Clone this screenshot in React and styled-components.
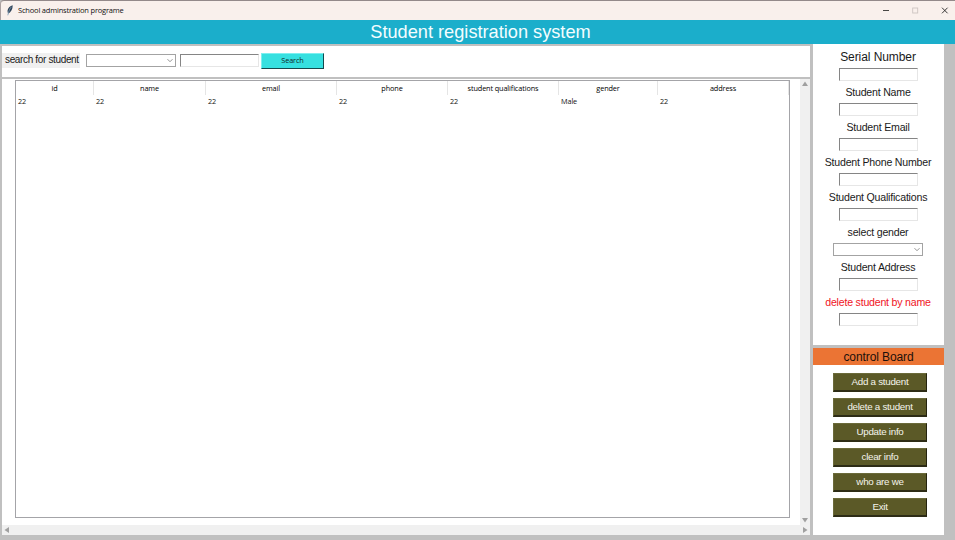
import React from "react";
import styled, { createGlobalStyle } from "styled-components";

const GlobalStyle = createGlobalStyle`
  * { box-sizing: border-box; }
  body { margin: 0; overflow: hidden; background: #c0c0c0; }
  button, input { font: inherit; margin: 0; outline: none; border-radius: 0; }
`;

const arial = `"Liberation Sans", Arial, sans-serif`;
const segoe = `"Open Sans", "Noto Sans", sans-serif`;

const Window = styled.div`
  width: 955px;
  height: 540px;
  display: flex;
  flex-direction: column;
  background: #c0c0c0;
  font-family: ${arial};
  color: #1a1a1a;
  overflow: hidden;
`;

const TitleBar = styled.header`
  height: 20px;
  flex: none;
  display: flex;
  align-items: center;
  background: #f9f0ec;
  border-top: 1px solid #93898a;
  border-left: 1px solid #aaa0a0;
  border-top-left-radius: 4px;
  padding: 0 0 1px 6px;
`;

const WindowTitle = styled.span`
  font: 7.5px/17px ${segoe};
  letter-spacing: -0.19px;
  margin-left: 5px;
  color: #111;
  flex: 1;
`;

const WindowControls = styled.svg`
  width: 76px;
  height: 19px;
  display: block;
`;

const Banner = styled.h1`
  height: 24px;
  flex: none;
  margin: 0;
  padding-left: 6px;
  background: #1baecb;
  color: #f3fdff;
  font: 400 18.2px/25px ${arial};
  text-align: center;
`;

const Body = styled.div`
  flex: 1;
  display: flex;
  gap: 3px;
  padding: 0 11px 5px 2px;
  min-height: 0;
`;

const Main = styled.main`
  width: 808px;
  display: flex;
  flex-direction: column;
  gap: 2px;
  padding-top: 2px;
`;

const SearchBar = styled.section`
  height: 31px;
  display: flex;
  align-items: center;
  padding-bottom: 2px;
  background: #fff;
`;

const SearchLabel = styled.label`
  width: 78px;
  height: 15px;
  background: #f0f0f0;
  font-size: 10px;
  line-height: 14px;
  padding-left: 3px;
  white-space: nowrap;
  letter-spacing: -0.35px;
`;

const Combo = styled.button`
  width: 90px;
  height: 13px;
  display: flex;
  align-items: center;
  justify-content: flex-end;
  padding: 0 2px 0 0;
  background: #fff;
  border: 1px solid #a3a3a3;
  margin: ${(p) => p.$margin || 0};
`;

const Entry = styled.input`
  display: block;
  width: 79px;
  height: 13px;
  padding: 0 2px;
  font-size: 9px;
  background: #fff;
  border: 1px solid;
  border-color: #858585 #e6e6e6 #e6e6e6 #858585;
`;

const SearchButton = styled.button`
  width: 63px;
  height: 16px;
  margin-left: 2px;
  padding: 0;
  background: #36e0e0;
  border: solid;
  border-width: 1px 1.5px 1.5px 1px;
  border-color: #7defef #15494d #15494d #7defef;
  font: 7.3px/13px ${segoe};
  letter-spacing: -0.1px;
  color: #102828;
`;

const TablePanel = styled.section`
  flex: 1;
  display: grid;
  grid-template: 1fr 10px / 1fr 10px;
  background: #fff;
`;

const TableFrame = styled.div`
  margin: 1px 10px 7px 13px;
  border: 1px solid #a4a4a8;
`;

const Table = styled.table`
  width: 773px;
  table-layout: fixed;
  border-collapse: separate;
  border-spacing: 0;
  font: 7.3px/13px ${segoe};
  color: #000;
  letter-spacing: -0.12px;
`;

const HeadCell = styled.th`
  width: ${(p) => p.$width}px;
  height: 14px;
  padding: 0;
  font-weight: 400;
  text-align: center;
  border-right: 1px solid #e5e5e5;
  white-space: nowrap;
`;

const Cell = styled.td`
  height: 13px;
  padding: 0 0 0 2px;
  color: #111;
`;

const Scrollbar = styled.div`
  display: flex;
  flex-direction: ${(p) => (p.$horizontal ? "row" : "column")};
  grid-column: ${(p) => (p.$horizontal ? "1 / 3" : "auto")};
  justify-content: space-between;
  align-items: center;
  padding: ${(p) => (p.$horizontal ? "0 2px" : "2px 0 2px")};
  background: #f0f0f0;
`;

const Side = styled.aside`
  width: 131px;
  display: flex;
  flex-direction: column;
  gap: 3px;
`;

const Form = styled.form`
  height: 301px;
  padding-top: 5px;
  background: #fff;
`;

const Field = styled.div`
  height: 35px;
  display: flex;
  flex-direction: column;
  align-items: center;
  padding-right: 1px;
`;

const FieldLabel = styled.label`
  height: 19px;
  line-height: ${(p) => (p.$large ? 17 : 16)}px;
  font-size: ${(p) => (p.$large ? 12 : 10.6)}px;
  color: ${(p) => p.$color || "#1a1a1a"};
  letter-spacing: ${(p) => (p.$large ? -0.08 : -0.21)}px;
  white-space: nowrap;
`;

const ControlBoard = styled.section`
  flex: 1;
  display: flex;
  flex-direction: column;
  align-items: center;
  background: #fff;
`;

const BoardTitle = styled.h2`
  width: 100%;
  height: 17px;
  margin: 0 0 8px;
  background: #eb7434;
  font: 400 12px/18px ${arial};
  letter-spacing: -0.1px;
  text-align: center;
  color: #1b100b;
`;

const BoardButton = styled.button`
  width: 94px;
  height: 19px;
  margin: 0 0 6px 3px;
  padding: 0;
  background: #5b5927;
  border: solid;
  border-width: 1px 1px 2px 1px;
  border-color: #6b6a3a #25240f #2d2c16 #6b6a3a;
  color: #f4f4ec;
  font: 9.8px/16px ${arial};
  letter-spacing: -0.28px;
`;

const Glyph = styled.svg`
  display: block;
  flex: none;
`;

const Chevron = () => (
  <Glyph width="6" height="5" viewBox="0 0 6 5">
    <path d="M.5 1.2 3 3.7 5.5 1.2" fill="none" stroke="#777" strokeWidth=".8" />
  </Glyph>
);

const Arrow = ({ points }) => (
  <Glyph width="6" height="6" viewBox="0 0 6 6">
    <polygon points={points} fill="#a0a0a0" />
  </Glyph>
);

const Feather = () => (
  <Glyph width="6" height="11" viewBox="0 0 6 11">
    <path d="M5.7.3C3.3.8 1 3 .6 5.3.4 6.7.8 8 1.3 8.5 4 7.3 5.8 4.2 5.7.3Z" fill="#2d4257" />
    <path d="M4.5 1.8C3 3.2 1.8 5.5.8 10.3" fill="none" stroke="#7d9ab5" strokeWidth=".8" />
  </Glyph>
);

const columns = [
  ["id", "22", 78],
  ["name", "22", 112],
  ["email", "22", 131],
  ["phone", "22", 111],
  ["student qualifications", "22", 111],
  ["gender", "Male", 99],
  ["address", "22", 131],
];

const fields = [
  { label: "Serial Number", large: true },
  { label: "Student Name" },
  { label: "Student Email" },
  { label: "Student Phone Number" },
  { label: "Student Qualifications" },
  { label: "select gender", combo: true },
  { label: "Student Address" },
  { label: "delete student by name", color: "#f0141e" },
];

const actions = ["Add a student", "delete a student", "Update info", "clear info", "who are we", "Exit"];

export default function App() {
  return (
    <>
      <GlobalStyle />
      <Window>
        <TitleBar>
          <Feather />
          <WindowTitle>School adminstration programe</WindowTitle>
          <WindowControls viewBox="0 0 76 19" fill="none">
            <path d="M4 9.5h6" stroke="#333" strokeWidth=".9" />
            <rect x="33.7" y="7" width="5" height="5" stroke="#ccc4c1" strokeWidth=".9" />
            <path d="m63 6.7 5.6 5.6m0-5.6L63 12.3" stroke="#222" strokeWidth=".9" />
          </WindowControls>
        </TitleBar>
        <Banner>Student registration system</Banner>
        <Body>
          <Main>
            <SearchBar>
              <SearchLabel>search for student</SearchLabel>
              <Combo $margin="0 4px 0 6px" aria-label="Search field"><Chevron /></Combo>
              <Entry aria-label="Search text" />
              <SearchButton>Search</SearchButton>
            </SearchBar>
            <TablePanel>
              <TableFrame>
                <Table>
                  <thead>
                    <tr>{columns.map(([name, , width]) => <HeadCell key={name} $width={width}>{name}</HeadCell>)}</tr>
                  </thead>
                  <tbody>
                    <tr>{columns.map(([name, value]) => <Cell key={name}>{value}</Cell>)}</tr>
                  </tbody>
                </Table>
              </TableFrame>
              <Scrollbar>
                <Arrow points="3,.5 6,5 0,5" />
                <Arrow points="0,1 6,1 3,5.5" />
              </Scrollbar>
              <Scrollbar $horizontal>
                <Arrow points="5,0 5,6 .5,3" />
                <Arrow points="1,0 1,6 5.5,3" />
              </Scrollbar>
            </TablePanel>
          </Main>
          <Side>
            <Form>
              {fields.map(({ label, large, combo, color }) => (
                <Field key={label}>
                  <FieldLabel $large={large} $color={color}>{label}</FieldLabel>
                  {combo ? <Combo type="button" aria-label={label}><Chevron /></Combo> : <Entry aria-label={label} />}
                </Field>
              ))}
            </Form>
            <ControlBoard>
              <BoardTitle>control Board</BoardTitle>
              {actions.map((label) => <BoardButton key={label}>{label}</BoardButton>)}
            </ControlBoard>
          </Side>
        </Body>
      </Window>
    </>
  );
}
